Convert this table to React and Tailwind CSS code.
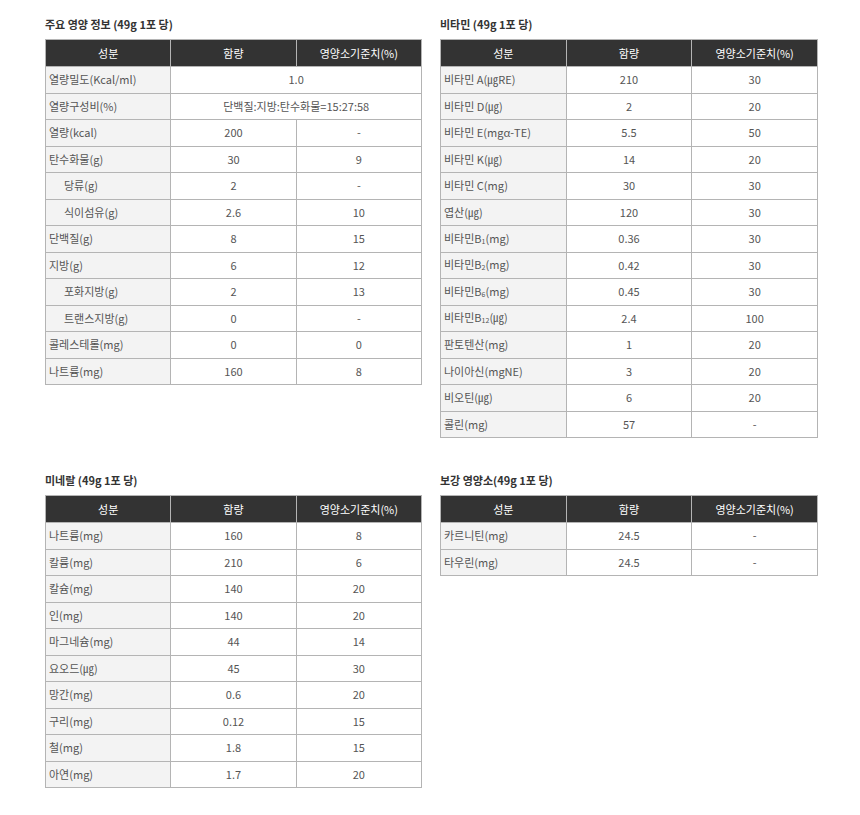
import React from 'react';

const font = { fontFamily: '"Noto Sans CJK KR", "Noto Sans", sans-serif' };

const sections = [
  {
    title: '주요 영양 정보 (49g 1포 당)',
    rows: [
      { name: '열량밀도(Kcal/ml)', span: '1.0' },
      { name: '열량구성비(%)', span: '단백질:지방:탄수화물=15:27:58' },
      { name: '열량(kcal)', amount: '200', daily: '-' },
      { name: '탄수화물(g)', amount: '30', daily: '9' },
      { name: '당류(g)', amount: '2', daily: '-', sub: true },
      { name: '식이섬유(g)', amount: '2.6', daily: '10', sub: true },
      { name: '단백질(g)', amount: '8', daily: '15' },
      { name: '지방(g)', amount: '6', daily: '12' },
      { name: '포화지방(g)', amount: '2', daily: '13', sub: true },
      { name: '트랜스지방(g)', amount: '0', daily: '-', sub: true },
      { name: '콜레스테롤(mg)', amount: '0', daily: '0' },
      { name: '나트륨(mg)', amount: '160', daily: '8' },
    ],
  },
  {
    title: '비타민 (49g 1포 당)',
    rows: [
      { name: '비타민 A(㎍RE)', amount: '210', daily: '30' },
      { name: '비타민 D(㎍)', amount: '2', daily: '20' },
      { name: '비타민 E(mgα-TE)', amount: '5.5', daily: '50' },
      { name: '비타민 K(㎍)', amount: '14', daily: '20' },
      { name: '비타민 C(mg)', amount: '30', daily: '30' },
      { name: '엽산(㎍)', amount: '120', daily: '30' },
      { name: ['비타민B', '1', '(mg)'], amount: '0.36', daily: '30' },
      { name: ['비타민B', '2', '(mg)'], amount: '0.42', daily: '30' },
      { name: ['비타민B', '6', '(mg)'], amount: '0.45', daily: '30' },
      { name: ['비타민B', '12', '(㎍)'], amount: '2.4', daily: '100' },
      { name: '판토텐산(mg)', amount: '1', daily: '20' },
      { name: '나이아신(mgNE)', amount: '3', daily: '20' },
      { name: '비오틴(㎍)', amount: '6', daily: '20' },
      { name: '콜린(mg)', amount: '57', daily: '-' },
    ],
  },
  {
    title: '미네랄 (49g 1포 당)',
    rows: [
      { name: '나트륨(mg)', amount: '160', daily: '8' },
      { name: '칼륨(mg)', amount: '210', daily: '6' },
      { name: '칼슘(mg)', amount: '140', daily: '20' },
      { name: '인(mg)', amount: '140', daily: '20' },
      { name: '마그네슘(mg)', amount: '44', daily: '14' },
      { name: '요오드(㎍)', amount: '45', daily: '30' },
      { name: '망간(mg)', amount: '0.6', daily: '20' },
      { name: '구리(mg)', amount: '0.12', daily: '15' },
      { name: '철(mg)', amount: '1.8', daily: '15' },
      { name: '아연(mg)', amount: '1.7', daily: '20' },
    ],
  },
  {
    title: '보강 영양소(49g 1포 당)',
    rows: [
      { name: '카르니틴(mg)', amount: '24.5', daily: '-' },
      { name: '타우린(mg)', amount: '24.5', daily: '-' },
    ],
  },
];

const RowName = ({ name }) => {
  if (Array.isArray(name)) {
    return (
      <>
        {name[0]}
        <span className="text-[7px] align-[-1px]">{name[1]}</span>
        {name[2]}
      </>
    );
  }
  return name;
};

const NutritionTable = ({ title, rows }) => (
  <div>
    <h3 className="text-[11px] font-bold text-[#333] leading-[15px] mb-[7px]">{title}</h3>
    <table className="w-full table-fixed border-collapse border border-[#b4b4b4] text-[11px] leading-none">
      <thead>
        <tr className="h-[27px] bg-[#333333] text-white">
          <th className="font-normal border border-[#b4b4b4]">성분</th>
          <th className="font-normal border border-[#b4b4b4]">함량</th>
          <th className="font-normal border border-[#b4b4b4]">영양소기준치(%)</th>
        </tr>
      </thead>
      <tbody className="text-[#555]">
        {rows.map((row, i) => (
          <tr key={i} className="h-[26.5px]">
            <td className={`bg-[#f3f3f3] border border-[#b4b4b4] text-left ${row.sub ? 'pl-[18px]' : 'pl-[3px]'}`}>
              <RowName name={row.name} />
            </td>
            {row.span ? (
              <td colSpan={2} className="border border-[#b4b4b4] text-center bg-white">{row.span}</td>
            ) : (
              <>
                <td className="border border-[#b4b4b4] text-center bg-white">{row.amount}</td>
                <td className="border border-[#b4b4b4] text-center bg-white">{row.daily}</td>
              </>
            )}
          </tr>
        ))}
      </tbody>
    </table>
  </div>
);

export default function App() {
  return (
    <div className="min-h-[815px] bg-white pt-[17px] pl-[45px]" style={font}>
      <div className="grid grid-cols-[377px_378px] gap-x-[18px] gap-y-[35px] items-start">
        {sections.map((s, i) => (
          <NutritionTable key={i} title={s.title} rows={s.rows} />
        ))}
      </div>
    </div>
  );
}
